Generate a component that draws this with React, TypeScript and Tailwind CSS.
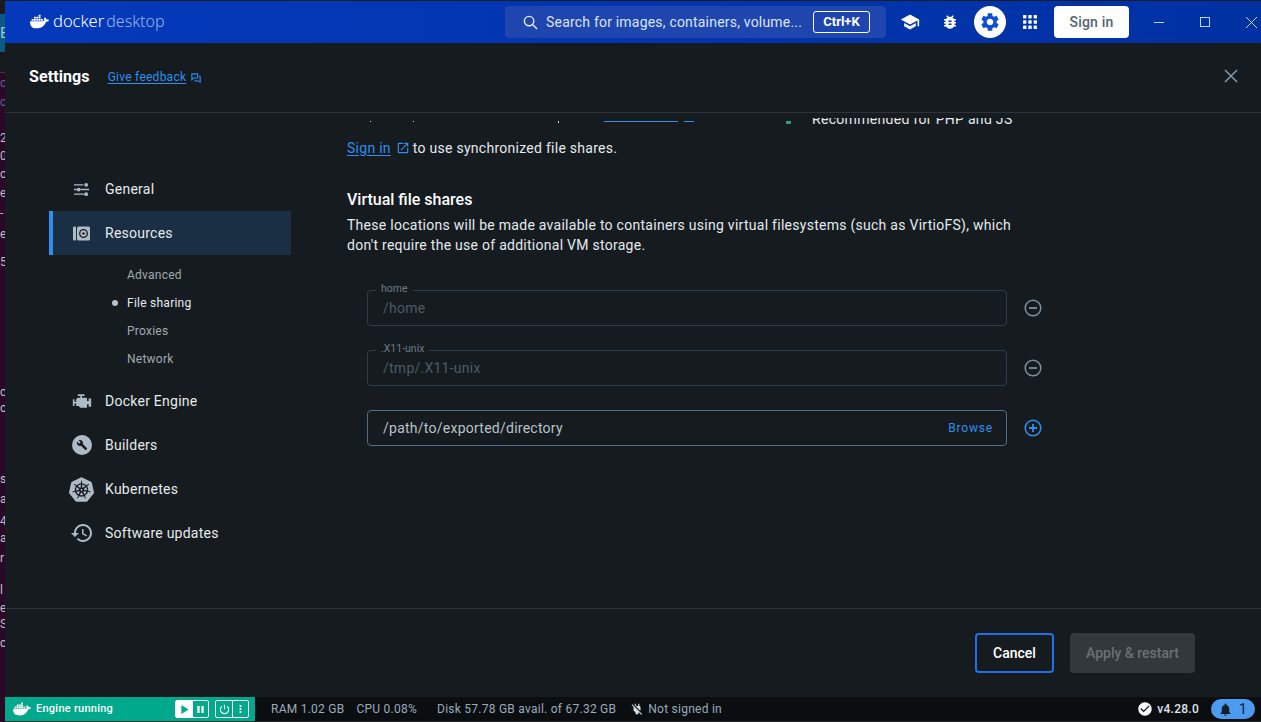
import React from "react";
import { SiDocker, SiKubernetes } from "react-icons/si";

const edgeRows = [
  { gap: "mt-[2px]", text: "oc", color: "text-[#6a5a9a]" },
  { gap: "mt-[3px]", text: "oc", color: "text-[#6a5a9a]" },
  { gap: "mt-[20px]", text: "2", color: "text-[#cbb9c7]" },
  { gap: "mt-[2px]", text: "05", color: "text-[#cbb9c7]" },
  { gap: "mt-[2px]", text: "o", color: "text-[#cbb9c7]" },
  { gap: "mt-[3px]", text: "e", color: "text-[#cbb9c7]" },
  { gap: "mt-[4px]", text: "-", color: "text-[#cbb9c7]" },
  { gap: "mt-[5px]", text: "e", color: "text-[#cbb9c7]" },
  { gap: "mt-[12px]", text: "5", color: "text-[#cbb9c7]" },
  { gap: "mt-[114px]", text: "c", color: "text-[#cbb9c7]" },
  { gap: "mt-0", text: "o", color: "text-[#cbb9c7]" },
  { gap: "mt-[55px]", text: "s", color: "text-[#cbb9c7]" },
  { gap: "mt-[4px]", text: "a", color: "text-[#cbb9c7]" },
  { gap: "mt-[6px]", text: "4", color: "text-[#cbb9c7]" },
  { gap: "mt-px", text: "a", color: "text-[#cbb9c7]" },
  { gap: "mt-[4px]", text: "r", color: "text-[#cbb9c7]" },
  { gap: "mt-[16px]", text: "l", color: "text-[#cbb9c7]" },
  { gap: "mt-[2px]", text: "e", color: "text-[#cbb9c7]" },
  { gap: "mt-0", text: "S", color: "text-[#cbb9c7]" },
  { gap: "mt-[3px]", text: "c", color: "text-[#cbb9c7]" },
];

function Icon({ d, className }: { d: string; className: string }) {
  return (
    <svg viewBox="0 0 24 24" fill="currentColor" className={className}>
      <path d={d} />
    </svg>
  );
}

function TuneIcon() {
  return (
    <svg viewBox="0 0 18 16" className="w-[17px] h-[15px]" stroke="currentColor" strokeWidth="1.4" fill="currentColor">
      <path d="M1 3h10M1 8h3M8 8h9M1 13h11" fill="none" />
      <circle cx="14" cy="3" r="2" stroke="none" />
      <circle cx="6" cy="8" r="2" stroke="none" />
      <circle cx="14" cy="13" r="2" stroke="none" />
    </svg>
  );
}

function ResourcesIcon() {
  return (
    <svg viewBox="0 0 17 15" className="w-[17px] h-[15px]">
      <rect x="0" y="0.5" width="3" height="14" rx="1" fill="currentColor" />
      <rect x="4" y="0.5" width="13" height="14" rx="1.5" fill="currentColor" />
      <circle cx="10.5" cy="7.5" r="3.8" fill="none" stroke="#151b1f" strokeWidth="1.3" />
      <circle cx="10.5" cy="7.5" r="1.2" fill="#151b1f" />
    </svg>
  );
}

function BuildersIcon() {
  return (
    <svg viewBox="0 0 20 20" className="w-[20px] h-[20px]">
      <circle cx="10" cy="10" r="10" fill="currentColor" />
      <g transform="translate(4.4 4.4) scale(0.47)">
        <path
          fill="#151b1f"
          d="M22.7 19l-9.1-9.1c.9-2.3.4-5-1.5-6.9-2-2-5-2.4-7.4-1.3L9 6 6 9 1.6 4.7C.4 7.1.9 10.1 2.9 12.1c1.9 1.9 4.6 2.4 6.9 1.5l9.1 9.1c.4.4 1 .4 1.4 0l2.3-2.3c.5-.4.5-1.1.1-1.4z"
        />
      </g>
    </svg>
  );
}

function NavItem({ icon, label, active }: { icon: React.ReactNode; label: string; active?: boolean }) {
  return (
    <div
      className={`h-[44px] flex items-center border-l-4 ${
        active ? "bg-[#1a2f44] border-[#2e8ff0]" : "border-transparent"
      }`}
    >
      <div className="w-[52px] pl-[5px] shrink-0 h-full flex items-center justify-center text-[#aebbc6]">{icon}</div>
      <span className="text-[14px] tracking-[0.25px] text-[#e4eaee]">{label}</span>
    </div>
  );
}

function SubItem({ label, active }: { label: string; active?: boolean }) {
  return (
    <div className="h-[28px] flex items-center pl-[59px] relative">
      {active && <span className="absolute left-[63px] w-[6px] h-[6px] rounded-full bg-[#b4c0ca]" />}
      <span className={`ml-[19px] text-[12px] tracking-[0.25px] ${active ? "text-[#e4eaee]" : "text-[#a2a9ae]"}`}>
        {label}
      </span>
    </div>
  );
}

function ShareField({ label, value }: { label: string; value: string }) {
  return (
    <div className="flex items-center">
      <div className="relative w-[640px] h-[36px] rounded border border-[#2f3d4a] flex items-center pl-[15px]">
        <span className="absolute left-[8px] top-[-9px] px-[5px] bg-[#151b1f] text-[10.5px] leading-[14px] text-[#6d7a85]">
          {label}
        </span>
        <span className="text-[14px] text-[#4d5a65] tracking-[0.25px]">{value}</span>
      </div>
      <svg viewBox="0 0 18 18" className="w-[18px] h-[18px] ml-[17px] text-[#7d8f9e]" fill="none" stroke="currentColor">
        <circle cx="9" cy="9" r="7.8" strokeWidth="1.5" />
        <path d="M5 9h8" strokeWidth="1.8" />
      </svg>
    </div>
  );
}

export default function App() {
  return (
    <div className="w-[1261px] h-[722px] overflow-hidden flex bg-[#151b1f] text-[#e4eaee] font-['Roboto',sans-serif]">
      {/* bit of the desktop showing behind the window */}
      <div className="w-[5px] shrink-0 flex flex-col overflow-hidden bg-[#2a0826]">
        <div className="h-[14px] shrink-0 bg-[#1b1b1d]" />
        <div className="h-[38px] shrink-0 bg-[#0b5a80] text-[15px] leading-[38px] text-[#9fc7da] overflow-hidden">B</div>
        <div className="h-[21px] shrink-0 bg-[#17191c] border-b border-[#3a3a3e]" />
        {edgeRows.map((row, i) => (
          <div key={i} className={`h-[16px] shrink-0 text-[12px] leading-[16px] whitespace-nowrap ${row.gap} ${row.color}`}>
            {row.text}
          </div>
        ))}
      </div>

      <div className="flex-1 min-w-0 flex flex-col">
        <div className="h-px shrink-0 bg-[#1c1f22]" />

        {/* top bar */}
        <header className="h-[42px] shrink-0 flex items-center bg-gradient-to-r from-[#0439bb] to-[#0031a3] overflow-hidden">
          <div className="w-[500px] shrink-0 pl-[25px] pb-[2px] flex items-center">
            <SiDocker className="w-[19px] h-[19px] text-white" />
            <span className="ml-[4px] text-[16.5px] leading-none font-light font-['Noto_Sans',sans-serif] text-white">docker</span>
            <span className="ml-[2px] text-[16px] leading-none font-light font-['Noto_Sans',sans-serif] text-[#9db4e4]">desktop</span>
          </div>
          <div className="w-[381px] h-[32px] shrink-0 rounded bg-[#1e46ae] flex items-center pl-[18px] pr-[16px]">
            <svg viewBox="0 0 16 16" className="w-[15px] h-[15px] text-[#e8eefb]" fill="none" stroke="currentColor" strokeWidth="1.5">
              <circle cx="6.5" cy="6.5" r="5" />
              <path d="M10.5 10.5 15 15" />
            </svg>
            <span className="ml-[8px] text-[14px] tracking-[0.2px] text-[#dbe4f8] whitespace-nowrap">
              Search for images, containers, volume...
            </span>
            <span className="ml-auto w-[57px] h-[22px] rounded-[3px] border border-white flex items-center justify-center text-[13px] font-bold text-white">
              Ctrl+K
            </span>
          </div>
          <div className="w-[4px] shrink-0" />
          <div className="w-[40px] shrink-0 flex justify-center text-white">
            <Icon className="w-[20px] h-[20px]" d="M5 13.18v4L12 21l7-3.82v-4L12 17l-7-3.82zM12 3 1 9l11 6 9-4.91V17h2V9L12 3z" />
          </div>
          <div className="w-[40px] shrink-0 flex justify-center text-white">
            <Icon
              className="w-[18px] h-[18px]"
              d="M20 8h-2.81c-.45-.78-1.07-1.45-1.82-1.96L17 4.41 15.59 3l-2.17 2.17C12.96 5.06 12.49 5 12 5c-.49 0-.96.06-1.41.17L8.41 3 7 4.41l1.62 1.63C7.88 6.55 7.26 7.22 6.81 8H4v2h2.09c-.05.33-.09.66-.09 1v1H4v2h2v1c0 .34.04.67.09 1H4v2h2.81c1.04 1.79 2.97 3 5.19 3s4.15-1.21 5.19-3H20v-2h-2.09c.05-.33.09-.66.09-1v-1h2v-2h-2v-1c0-.34-.04-.67-.09-1H20V8zm-6 8h-4v-2h4v2zm0-4h-4v-2h4v2z"
            />
          </div>
          <div className="w-[40px] shrink-0 flex justify-center">
            <div className="w-[32px] h-[32px] rounded-full bg-white flex items-center justify-center text-[#0f4fd1]">
              <Icon
                className="w-[22px] h-[22px]"
                d="M19.14 12.94c.04-.3.06-.61.06-.94 0-.32-.02-.64-.07-.94l2.03-1.58c.18-.14.23-.41.12-.61l-1.92-3.32c-.12-.22-.37-.29-.59-.22l-2.39.96c-.5-.38-1.03-.7-1.62-.94l-.36-2.54c-.04-.24-.24-.41-.48-.41h-3.84c-.24 0-.43.17-.47.41l-.36 2.54c-.59.24-1.13.57-1.62.94l-2.39-.96c-.22-.08-.47 0-.59.22L2.74 8.87c-.12.21-.08.47.12.61l2.03 1.58c-.05.3-.09.63-.09.94s.02.64.07.94l-2.03 1.58c-.18.14-.23.41-.12.61l1.92 3.32c.12.22.37.29.59.22l2.39-.96c.5.38 1.03.7 1.62.94l.36 2.54c.05.24.24.41.48.41h3.84c.24 0 .44-.17.47-.41l.36-2.54c.59-.24 1.13-.56 1.62-.94l2.39.96c.22.08.47 0 .59-.22l1.92-3.32c.12-.22.07-.47-.12-.61l-2.01-1.58zM12 15.6c-1.98 0-3.6-1.62-3.6-3.6s1.62-3.6 3.6-3.6 3.6 1.62 3.6 3.6-1.62 3.6-3.6 3.6z"
              />
            </div>
          </div>
          <div className="w-[40px] shrink-0 flex justify-center text-white">
            <svg viewBox="0 0 14 14" className="w-[14px] h-[14px]" fill="currentColor">
              <rect x="0" y="0" width="3.4" height="3.4" rx="0.6" />
              <rect x="5.3" y="0" width="3.4" height="3.4" rx="0.6" />
              <rect x="10.6" y="0" width="3.4" height="3.4" rx="0.6" />
              <rect x="0" y="5.3" width="3.4" height="3.4" rx="0.6" />
              <rect x="5.3" y="5.3" width="3.4" height="3.4" rx="0.6" />
              <rect x="10.6" y="5.3" width="3.4" height="3.4" rx="0.6" />
              <rect x="0" y="10.6" width="3.4" height="3.4" rx="0.6" />
              <rect x="5.3" y="10.6" width="3.4" height="3.4" rx="0.6" />
              <rect x="10.6" y="10.6" width="3.4" height="3.4" rx="0.6" />
            </svg>
          </div>
          <div className="ml-[4px] w-[75px] h-[32px] shrink-0 rounded bg-white flex items-center justify-center text-[14px] font-medium text-[#56636f] tracking-[0.2px]">
            Sign in
          </div>
          <div className="ml-[7px] w-[46px] flex justify-center shrink-0">
            <div className="w-[10px] h-px bg-[#c5d2ee]" />
          </div>
          <div className="w-[46px] flex justify-center shrink-0">
            <div className="w-[10px] h-[10px] border border-[#c5d2ee]" />
          </div>
          <div className="w-[46px] flex justify-center shrink-0 text-[#c5d2ee]">
            <svg viewBox="0 0 11 11" className="w-[11px] h-[11px]" fill="none" stroke="currentColor">
              <path d="M0 0 11 11M11 0 0 11" />
            </svg>
          </div>
        </header>

        {/* settings title */}
        <div className="h-[70px] shrink-0 border-b border-[#2d3338] flex items-center pl-[24px] pr-[23px] pb-[2px]">
          <span className="text-[16px] font-bold tracking-[0.1px] text-white">Settings</span>
          <a className="ml-[18px] text-[12px] tracking-[0.25px] text-[#2e8ff0] underline underline-offset-2">Give feedback</a>
          <svg viewBox="0 0 12 12" className="ml-[5px] mt-[2px] w-[10px] h-[10px] text-[#2e8ff0]" fill="none" stroke="currentColor" strokeWidth="1.3">
            <path d="M1 1h7v5H3L1 8z" />
            <path d="M9.5 4H11v7l-2-1.5H5V8" />
          </svg>
          <svg viewBox="0 0 14 14" className="ml-auto mb-[2px] w-[14px] h-[14px] text-[#7f93a4]" fill="none" stroke="currentColor" strokeWidth="1.7">
            <path d="M1 1 13 13M13 1 1 13" />
          </svg>
        </div>

        {/* sidebar + file sharing */}
        <div className="flex-1 min-h-0 flex">
          <nav className="ml-[44px] w-[242px] shrink-0 pt-[54px]">
            <NavItem icon={<TuneIcon />} label="General" />
            <NavItem icon={<ResourcesIcon />} label="Resources" active />
            <div className="pt-[6px] pb-[6px]">
              <SubItem label="Advanced" />
              <SubItem label="File sharing" active />
              <SubItem label="Proxies" />
              <SubItem label="Network" />
            </div>
            <NavItem
              icon={
                <Icon
                  className="w-[20px] h-[20px]"
                  d="M7 4v2h3v2H7l-2 2v3H3v-3H1v8h2v-3h2v3h3l2 2h8v-4h2v3h3V9h-3v3h-2V8h-6V6h3V4H7z"
                />
              }
              label="Docker Engine"
            />
            <NavItem icon={<BuildersIcon />} label="Builders" />
            <NavItem icon={<SiKubernetes className="w-[25px] h-[25px]" />} label="Kubernetes" />
            <NavItem
              icon={
                <Icon
                  className="w-[24px] h-[24px]"
                  d="M13 3c-4.97 0-9 4.03-9 9H1l3.89 3.89.07.14L9 12H6c0-3.87 3.13-7 7-7s7 3.13 7 7-3.13 7-7 7c-1.93 0-3.68-.79-4.94-2.06l-1.42 1.42C8.27 19.99 10.51 21 13 21c4.97 0 9-4.03 9-9s-4.03-9-9-9zm-1 5v5l4.28 2.54.72-1.21-3.5-2.08V8H12z"
                />
              }
              label="Software updates"
            />
          </nav>

          <main className="ml-[56px] flex-1 min-w-0">
            {/* row scrolled away under the title, only its bottom shows */}
            <div className="mt-[5px] h-[6px] overflow-hidden flex items-end relative">
              <span className="absolute left-[23px] bottom-[2px] w-px h-px bg-[#cfd6db]" />
              <span className="absolute left-[66px] bottom-[2px] w-px h-px bg-[#cfd6db]" />
              <span className="absolute left-[211px] bottom-[1px] w-px h-[2px] bg-[#cfd6db]" />
              <span className="absolute left-[257px] bottom-[2px] w-[74px] h-px bg-[#2e8ff0]" />
              <span className="absolute left-[337px] bottom-[2px] w-[10px] h-px bg-[#2e8ff0]" />
              <span className="absolute left-[439px] bottom-0 w-[5px] h-[3px] bg-[#1fa67f]" />
              <span className="absolute left-[465px] bottom-[-5px] text-[14px] leading-[20px] tracking-[0.3px] whitespace-nowrap">
                Recommended for PHP and JS
              </span>
            </div>

            <div className="mt-[14px] h-[20px] flex items-center text-[14px] tracking-[0.27px]">
              <a className="text-[#2e8ff0] underline underline-offset-2">Sign in</a>
              <Icon
                className="ml-[5px] w-[14px] h-[14px] text-[#2e8ff0]"
                d="M19 19H5V5h7V3H5c-1.11 0-2 .9-2 2v14c0 1.1.89 2 2 2h14c1.1 0 2-.9 2-2v-7h-2v7zM14 3v2h3.59l-9.83 9.83 1.41 1.41L19 6.41V10h2V3h-7z"
              />
              <span className="ml-[3px]">to use synchronized file shares.</span>
            </div>

            <h2 className="mt-[31px] text-[16px] leading-[22px] font-medium text-white">Virtual file shares</h2>
            <p className="mt-[4px] w-[680px] text-[14px] leading-[20px] tracking-[0.27px]">
              These locations will be made available to containers using virtual filesystems (such as VirtioFS), which
              don't require the use of additional VM storage.
            </p>

            <div className="mt-[35px] ml-[20px] flex flex-col gap-[24px]">
              <ShareField label="home" value="/home" />
              <ShareField label=".X11-unix" value="/tmp/.X11-unix" />
              <div className="flex items-center">
                <div className="w-[640px] h-[36px] rounded border border-[#4e6e8c] flex items-center pl-[15px] pr-[13px]">
                  <span className="text-[14px] text-[#b9c4cc] tracking-[0.25px]">/path/to/exported/directory</span>
                  <span className="ml-auto text-[12px] tracking-[0.8px] text-[#2e8ff0]">Browse</span>
                </div>
                <svg viewBox="0 0 18 18" className="w-[18px] h-[18px] ml-[17px] text-[#2e8ff0]" fill="none" stroke="currentColor">
                  <circle cx="9" cy="9" r="7.8" strokeWidth="1.5" />
                  <path d="M5 9h8M9 5v8" strokeWidth="1.8" />
                </svg>
              </div>
            </div>
          </main>
        </div>

        {/* footer buttons */}
        <div className="h-[89px] shrink-0 border-t border-[#2d3338] flex items-start justify-end gap-[16px] pt-[24px] pr-[66px]">
          <div className="w-[79px] h-[40px] rounded border-2 border-[#2170e6] flex items-center justify-center text-[14px] font-medium text-white">
            Cancel
          </div>
          <div className="w-[125px] h-[40px] rounded bg-[#33383c] flex items-center justify-center text-[14px] font-medium text-[#6b7074]">
            Apply &amp; restart
          </div>
        </div>

        {/* status bar */}
        <footer className="h-[24px] shrink-0 flex items-center bg-[#0a0e11] text-[12px] tracking-[0.25px] text-[#9aabbb]">
          <div className="w-[250px] h-full shrink-0 bg-[#00a88c] flex items-center pl-[8px] text-white">
            <SiDocker className="w-[18px] h-[18px]" />
            <span className="ml-[5px] text-[11px] font-medium tracking-[0.25px]">Engine running</span>
            <div className="ml-auto flex items-center gap-[6px] pr-[6px]">
              <div className="w-[34px] h-[18px] rounded-[2px] border border-white flex">
                <div className="w-[17px] bg-white flex items-center justify-center text-[#00a88c]">
                  <svg viewBox="0 0 10 10" className="w-[9px] h-[9px]" fill="currentColor">
                    <path d="M1.5 0 9.5 5 1.5 10z" />
                  </svg>
                </div>
                <div className="flex-1 flex items-center justify-center">
                  <svg viewBox="0 0 10 10" className="w-[9px] h-[9px]" fill="currentColor">
                    <path d="M1.5 1h2.5v8H1.5zM6 1h2.5v8H6z" />
                  </svg>
                </div>
              </div>
              <div className="w-[34px] h-[18px] rounded-[2px] border border-white flex">
                <div className="w-[17px] border-r border-white flex items-center justify-center">
                  <svg viewBox="0 0 12 12" className="w-[11px] h-[11px]" fill="none" stroke="currentColor" strokeWidth="1.2">
                    <path d="M3.2 2.5a4.5 4.5 0 1 0 5.6 0M6 .8v5" />
                  </svg>
                </div>
                <div className="flex-1 flex items-center justify-center">
                  <svg viewBox="0 0 4 12" className="w-[3px] h-[10px]" fill="currentColor">
                    <circle cx="2" cy="2" r="1.5" />
                    <circle cx="2" cy="6" r="1.5" />
                    <circle cx="2" cy="10" r="1.5" />
                  </svg>
                </div>
              </div>
            </div>
          </div>
          <span className="ml-[16px]">RAM 1.02 GB</span>
          <span className="ml-[12px]">CPU 0.08%</span>
          <span className="ml-[20px]">Disk 57.78 GB avail. of 67.32 GB</span>
          <Icon
            className="ml-[14px] w-[14px] h-[14px] text-[#d4dbe1]"
            d="M18 14.49V9c0-1-1.01-2.01-2-2V3h-2v4h-4V3H8v2.48l9.51 9.5.49-.49zm-1.76 1.77L7.2 7.2l-.01.01L3.98 4 2.71 5.25l3.36 3.36C6.04 8.74 6 8.87 6 9v5.48L9.5 18v3h5v-3l.48-.48L19.45 22l1.26-1.28-4.47-4.46z"
          />
          <span className="ml-[4px]">Not signed in</span>
          <Icon
            className="ml-auto w-[16px] h-[16px] text-white"
            d="M12 2C6.48 2 2 6.48 2 12s4.48 10 10 10 10-4.48 10-10S17.52 2 12 2zm-2 15-5-5 1.41-1.41L10 14.17l7.59-7.59L19 8l-9 9z"
          />
          <span className="ml-[4px] font-medium text-[#dfe5ea]">v4.28.0</span>
          <div className="ml-[12px] mr-[6px] w-[44px] h-[20px] rounded-full bg-[#4b9cf0] flex items-center pl-[7px] gap-[6px] text-[#14202b]">
            <Icon
              className="w-[15px] h-[15px]"
              d="M12 22c1.1 0 2-.9 2-2h-4c0 1.1.9 2 2 2zm6-6v-5c0-3.07-1.64-5.64-4.5-6.32V4c0-.83-.67-1.5-1.5-1.5s-1.5.67-1.5 1.5v.68C7.63 5.36 6 7.92 6 11v5l-2 2v1h16v-1l-2-2z"
            />
            <span className="text-[14px]">1</span>
          </div>
        </footer>
        <div className="h-px shrink-0 bg-[#23282c]" />
      </div>
    </div>
  );
}
